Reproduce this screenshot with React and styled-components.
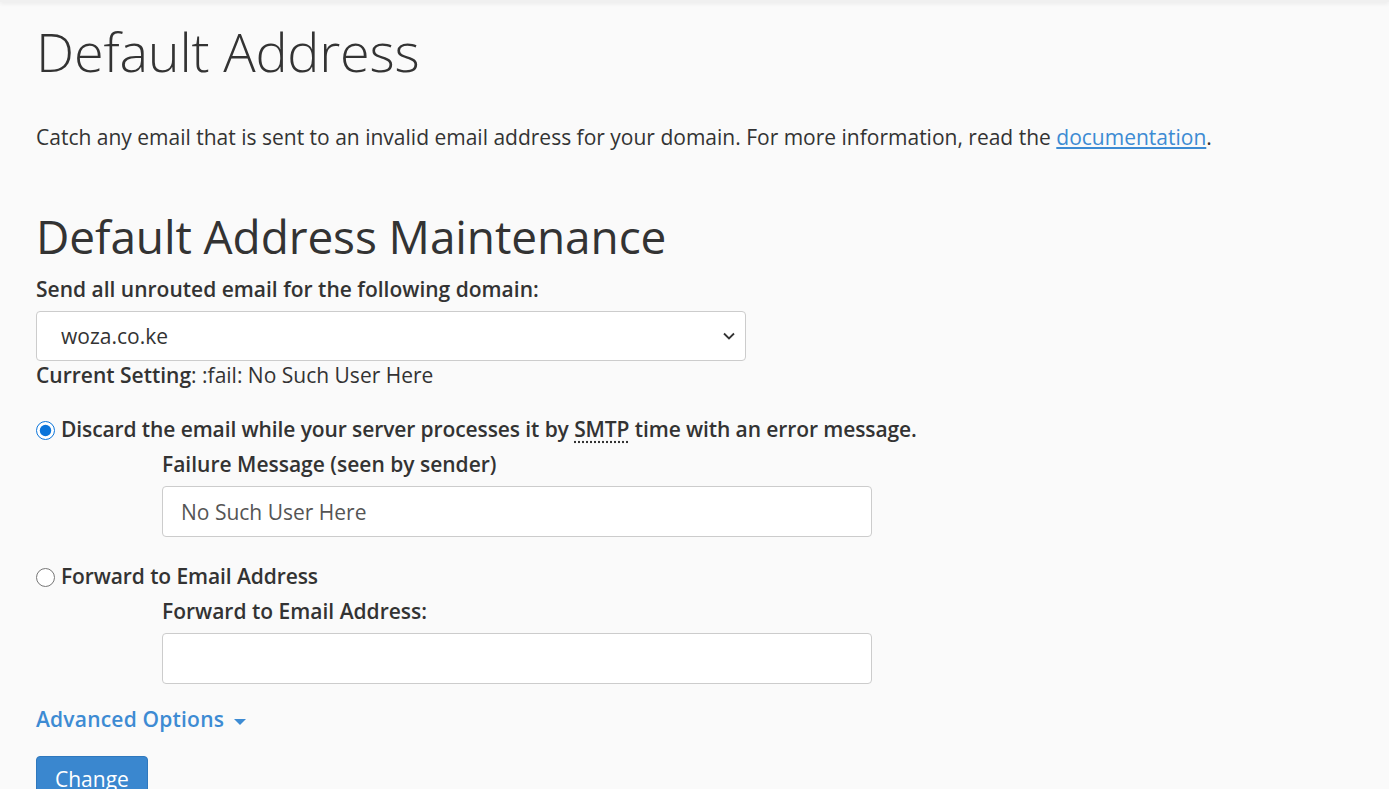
import React from 'react';
import styled, { createGlobalStyle } from 'styled-components';

const GlobalStyle = createGlobalStyle`
  html, body {
    margin: 0;
    padding: 0;
    background: #fafafa;
  }
  body {
    font-family: 'Open Sans', 'Noto Sans', sans-serif;
    color: #333;
    font-size: 21px;
  }
`;

const TopShadow = styled.div`
  height: 2px;
  background: #f0f0f0;
  box-shadow: 0 1px 4px rgba(0, 0, 0, 0.12);
`;

const Page = styled.main`
  padding: 0 36px;
`;

const Title = styled.h1`
  font-size: 54px;
  font-weight: 300;
  line-height: 1.2;
  margin: 17px 0 0;
  letter-spacing: -0.2px;
`;

const Intro = styled.p`
  margin: 38px 0 0;
  line-height: 1.5;

  a {
    color: #3d8bd3;
    text-decoration: underline;
  }
`;

const SectionTitle = styled.h2`
  font-size: 46px;
  font-weight: 400;
  line-height: 1.2;
  margin: 56px 0 0;
  letter-spacing: -0.1px;
`;

const FieldLabel = styled.label`
  display: block;
  font-weight: 600;
  line-height: 1.5;
  margin: 10px 0 5px;
`;

const SelectBox = styled.div`
  position: relative;
  width: 710px;
`;

const Select = styled.select`
  width: 100%;
  height: 50px;
  box-sizing: border-box;
  appearance: none;
  border: 1px solid #ccc;
  border-radius: 4px;
  background: #fff;
  font-family: inherit;
  font-size: 21px;
  color: #333;
  padding: 0 0 0 24px;
`;

const Chevron = styled.svg`
  position: absolute;
  right: 10px;
  top: 20px;
  pointer-events: none;
`;

const Setting = styled.div`
  line-height: 1.3;
  margin-top: 1px;

  strong {
    font-weight: 600;
  }
`;

const Option = styled.label`
  display: flex;
  align-items: center;
  gap: 6px;
  line-height: 1.5;
  margin-top: ${(p) => p.$top}px;
  font-weight: 600;

  input {
    margin: 0;
    width: 19px;
    height: 19px;
    accent-color: #0a74da;
  }

  abbr {
    text-decoration: underline dotted;
    text-underline-offset: 4px;
  }
`;

const OptionText = styled.span`
  letter-spacing: -0.1px;
`;

const Indent = styled.div`
  padding-left: 126px;
`;

const SubLabel = styled.label`
  display: block;
  line-height: 1.5;
  margin: 3px 0 6px;
  font-weight: 600;
`;

const TextInput = styled.input`
  width: 710px;
  height: 51px;
  box-sizing: border-box;
  border: 1px solid #ccc;
  border-radius: 4px;
  background: #fff;
  font-family: inherit;
  font-size: 21px;
  color: #555;
  padding: 0 18px;
  display: block;
`;

const Advanced = styled.a`
  display: inline-flex;
  align-items: center;
  gap: 10px;
  margin-top: 20px;
  color: #3d8bd3;
  font-weight: 600;
  text-decoration: none;
  line-height: 1.5;
  letter-spacing: 0.2px;
`;

const Caret = styled.span`
  width: 0;
  height: 0;
  border-left: 6px solid transparent;
  border-right: 6px solid transparent;
  border-top: 6px solid #3d8bd3;
  margin-top: 3px;
`;

const Button = styled.button`
  display: block;
  margin-top: 20px;
  background: #3a87cf;
  border: 1px solid #2f78bd;
  border-radius: 4px;
  color: #fff;
  font-family: inherit;
  font-size: 21px;
  padding: 8px 18px;
`;

export default function App() {
  return (
    <>
      <GlobalStyle />
      <TopShadow />
      <Page>
        <Title>Default Address</Title>
        <Intro>
          Catch any email that is sent to an invalid email address for your domain. For more
          information, read the <a href="#doc">documentation</a>.
        </Intro>
        <SectionTitle>Default Address Maintenance</SectionTitle>
        <FieldLabel>Send all unrouted email for the following domain:</FieldLabel>
        <SelectBox>
          <Select defaultValue="woza.co.ke">
            <option>woza.co.ke</option>
          </Select>
          <Chevron width="14" height="10" viewBox="0 0 14 10">
            <path d="M2 2.5l5 5 5-5" fill="none" stroke="#333" strokeWidth="1.8" />
          </Chevron>
        </SelectBox>
        <Setting>
          <strong>Current Setting</strong>: :fail: No Such User Here
        </Setting>
        <Option $top={25}>
          <input type="radio" name="mode" defaultChecked />
          <OptionText>
            Discard the email while your server processes it by <abbr>SMTP</abbr> time with an
            error message.
          </OptionText>
        </Option>
        <Indent>
          <SubLabel>Failure Message (seen by sender)</SubLabel>
          <TextInput defaultValue="No Such User Here" />
        </Indent>
        <Option $top={24}>
          <input type="radio" name="mode" />
          <OptionText>Forward to Email Address</OptionText>
        </Option>
        <Indent>
          <SubLabel>Forward to Email Address:</SubLabel>
          <TextInput />
        </Indent>
        <Advanced href="#adv">
          Advanced Options <Caret />
        </Advanced>
        <Button>Change</Button>
      </Page>
    </>
  );
}
